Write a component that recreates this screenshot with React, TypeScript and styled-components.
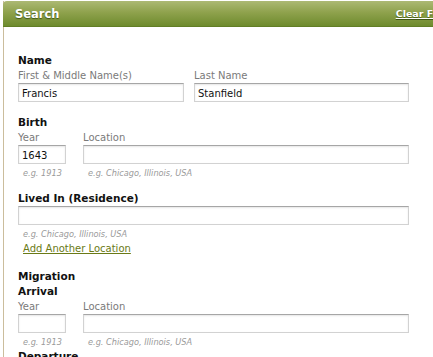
import React from "react";
import styled, { createGlobalStyle } from "styled-components";

const Global = createGlobalStyle`
  html, body { margin: 0; padding: 0; background: #fff; overflow: hidden; }
  body { font-family: "DejaVu Sans", Verdana, sans-serif; }
`;

const Panel = styled.div`
  margin: 1px 0 0 3px;
  width: 460px;
  border-left: 1px solid #cbbd9c;
  background: #fff;
`;

const Header = styled.div`
  display: flex;
  align-items: center;
  height: 25px;
  padding: 0 10px 0 12px;
  border-top-left-radius: 4px;
  background: linear-gradient(to bottom, #acb974 0%, #8fa24d 45%, #6e8b2d 100%);
  border-bottom: 1px solid #627e26;
  margin-left: -1px;
`;

const Title = styled.div`
  flex: 1;
  color: #fff;
  font-weight: bold;
  font-size: 11.5px;
  text-shadow: 0 1px 1px #3f5514;
`;

const ClearLink = styled.a`
  color: #fff;
  font-weight: bold;
  font-size: 9.5px;
  text-decoration: underline;
  text-shadow: 0 1px 1px #3f5514;
`;

const Body = styled.div`
  padding: 26px 0 0 14px;
  width: 391px;
`;

const Section = styled.div<{ $gap?: number }>`
  margin-top: ${(p) => p.$gap ?? 0}px;
`;

const Heading = styled.div`
  font-size: 10.5px;
  font-weight: bold;
  line-height: 15px;
  color: #111;
`;

const Row = styled.div<{ $gap: number }>`
  display: flex;
  gap: ${(p) => p.$gap}px;
`;

const Field = styled.div<{ $w?: number }>`
  display: flex;
  flex-direction: column;
  ${(p) => (p.$w ? `width: ${p.$w}px;` : "flex: 1;")}
`;

const Label = styled.div`
  font-size: 10px;
  line-height: 15px;
  color: #7a7a7a;
`;

const Input = styled.input`
  display: block;
  box-sizing: border-box;
  width: 100%;
  height: 19px;
  margin: 0;
  padding: 1px 3px 0;
  font-family: "DejaVu Sans", Verdana, sans-serif;
  font-size: 10px;
  color: #111;
  border: 1px solid #d2d2d2;
  border-top-color: #a6a6a6;
  box-shadow: inset 0 1px 2px rgba(0, 0, 0, 0.1);
  outline: none;
  background: #fff;
`;

const Hint = styled.div`
  margin-top: 2px;
  font-size: 8.2px;
  font-style: italic;
  line-height: 14px;
  color: #9a9a9a;
  padding-left: 5px;
  white-space: nowrap;
`;

const AddLink = styled.a`
  display: block;
  width: fit-content;
  margin-left: 5px;
  font-size: 10px;
  line-height: 15px;
  color: #6a7a16;
  text-decoration: underline;
`;

export default function App() {
  return (
    <>
      <Global />
      <Panel>
        <Header>
          <Title>Search</Title>
          <ClearLink>Clear Form</ClearLink>
        </Header>
        <Body>
          <Section>
            <Heading>Name</Heading>
            <Row $gap={10}>
              <Field $w={166}>
                <Label>First &amp; Middle Name(s)</Label>
                <Input defaultValue="Francis" />
              </Field>
              <Field>
                <Label>Last Name</Label>
                <Input defaultValue="Stanfield" />
              </Field>
            </Row>
          </Section>
          <Section $gap={13}>
            <Heading>Birth</Heading>
            <Row $gap={17}>
              <Field $w={48}>
                <Label>Year</Label>
                <Input defaultValue="1643" />
                <Hint>e.g. 1913</Hint>
              </Field>
              <Field>
                <Label>Location</Label>
                <Input />
                <Hint>e.g. Chicago, Illinois, USA</Hint>
              </Field>
            </Row>
          </Section>
          <Section $gap={11}>
            <Heading>Lived In (Residence)</Heading>
            <Input />
            <Hint>e.g. Chicago, Illinois, USA</Hint>
            <AddLink>Add Another Location</AddLink>
          </Section>
          <Section $gap={13}>
            <Heading>Migration</Heading>
            <Heading>Arrival</Heading>
            <Row $gap={17}>
              <Field $w={48}>
                <Label>Year</Label>
                <Input />
                <Hint>e.g. 1913</Hint>
              </Field>
              <Field>
                <Label>Location</Label>
                <Input />
                <Hint>e.g. Chicago, Illinois, USA</Hint>
              </Field>
            </Row>
            <Heading>Departure</Heading>
          </Section>
        </Body>
      </Panel>
    </>
  );
}
